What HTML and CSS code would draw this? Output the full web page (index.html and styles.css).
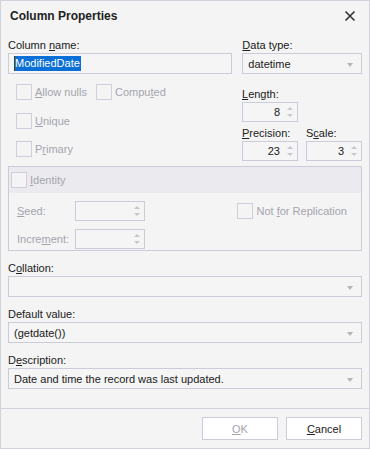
FILE: index.html
```html
<!DOCTYPE html>
<html>
<head>
<meta charset="utf-8">
<link rel="stylesheet" href="styles.css">
</head>
<body>
<div class="window">
  <div class="titlebar">
    <span class="title">Column Properties</span>
    <svg class="close" width="12" height="12" viewBox="0 0 12 12"><path d="M1.5 1.5 L10.5 10.5 M10.5 1.5 L1.5 10.5" stroke="#333" stroke-width="1.6"/></svg>
  </div>
  <div class="content">
    <div class="row1">
      <div class="field name-field">
        <label class="lbl">Column <u>n</u>ame:</label>
        <div class="input"><span class="caret"></span><span class="sel">ModifiedDate</span></div>
      </div>
      <div class="field type-field">
        <label class="lbl"><u>D</u>ata type:</label>
        <div class="input combo"><span>datetime</span><i class="arrow"></i></div>
      </div>
    </div>
    <div class="row2">
      <div class="checks">
        <div class="checkline">
          <div class="chk"><span class="box"></span><span class="dis"><u>A</u>llow nulls</span></div>
          <div class="chk"><span class="box"></span><span class="dis">Compu<u>t</u>ed</span></div>
        </div>
        <div class="checkline">
          <div class="chk"><span class="box"></span><span class="dis"><u>U</u>nique</span></div>
        </div>
        <div class="checkline">
          <div class="chk"><span class="box"></span><span class="dis">P<u>r</u>imary</span></div>
        </div>
      </div>
      <div class="sizes">
        <label class="lbl"><u>L</u>ength:</label>
        <div class="spin"><span class="val">8</span><span class="arrows"><i class="up"></i><i class="down"></i></span></div>
        <div class="prec-row">
          <div class="pfield">
            <label class="lbl"><u>P</u>recision:</label>
            <div class="spin"><span class="val">23</span><span class="arrows"><i class="up"></i><i class="down"></i></span></div>
          </div>
          <div class="pfield">
            <label class="lbl">S<u>c</u>ale:</label>
            <div class="spin"><span class="val">3</span><span class="arrows"><i class="up"></i><i class="down"></i></span></div>
          </div>
        </div>
      </div>
    </div>
    <div class="group">
      <div class="group-head">
        <span class="box"></span><span class="dis"><u>I</u>dentity</span>
      </div>
      <div class="group-body">
        <div class="idcol">
          <div class="idrow"><span class="dis idlbl"><u>S</u>eed:</span><div class="spin dspin"><span class="arrows"><i class="up"></i><i class="down"></i></span></div></div>
          <div class="idrow"><span class="dis idlbl">Incre<u>m</u>ent:</span><div class="spin dspin"><span class="arrows"><i class="up"></i><i class="down"></i></span></div></div>
        </div>
        <div class="chk repl"><span class="box"></span><span class="dis">Not <u>f</u>or Replication</span></div>
      </div>
    </div>
    <div class="field wide">
      <label class="lbl">C<u>o</u>llation:</label>
      <div class="input combo"><span></span><i class="arrow"></i></div>
    </div>
    <div class="field wide">
      <label class="lbl">Default value:</label>
      <div class="input combo"><span>(getdate())</span><i class="arrow"></i></div>
    </div>
    <div class="field wide">
      <label class="lbl">D<u>e</u>scription:</label>
      <div class="input combo"><span>Date and time the record was last updated.</span><i class="arrow"></i></div>
    </div>
  </div>
  <div class="footer">
    <button class="btn dis-btn"><u>O</u>K</button>
    <button class="btn"><u>C</u>ancel</button>
  </div>
</div>
</body>
</html>
```

FILE: styles.css
```css
* { box-sizing: border-box; }
html, body { margin: 0; padding: 0; background: #f4f4f4; }
body {
  font-family: "Liberation Sans", Arial, sans-serif;
  font-size: 11px;
  color: #202020;
}
u { text-decoration: underline; text-underline-offset: 1px; }
.window {
  width: 370px;
  height: 449px;
  border: 1px solid #d2d2da;
  background: #f4f4f4;
  display: flex;
  flex-direction: column;
}
.titlebar {
  height: 30px;
  display: flex;
  align-items: center;
  justify-content: space-between;
  padding: 0 13px 0 9px;
}
.title { font-weight: bold; font-size: 12px; color: #222; }
.content {
  flex: 1;
  padding: 6px 7px 0 7px;
  display: flex;
  flex-direction: column;
}
.lbl { display: block; height: 16px; line-height: 16px; }
.row1 { display: flex; gap: 10px; }
.name-field { width: 225px; }
.type-field { width: 120px; }
.input {
  height: 21px;
  border: 1px solid #cbcbd9;
  background: #f5f5f5;
  display: flex;
  align-items: center;
  padding: 0 5px;
}
.caret { width: 1px; height: 15px; background: #5a3b00; }
.sel {
  background: #0a6fd6;
  color: #fff;
  line-height: 15px;
  padding: 0 1px 0 0;
}
.combo { justify-content: space-between; padding-right: 8px; }
.arrow {
  width: 0; height: 0;
  border-left: 3.5px solid transparent;
  border-right: 3.5px solid transparent;
  border-top: 4px solid #b4b4bc;
  margin-top: 2px;
}
.row2 {
  display: flex;
  justify-content: space-between;
  height: 92px;
}
.checks { padding: 10px 0 0 8px; }
.checkline { display: flex; gap: 9px; height: 28.5px; }
.chk { display: flex; align-items: center; gap: 3px; height: 16px; }
.box {
  width: 16px; height: 16px;
  border: 1px solid #cfcfdc;
  background: #f4f4f4;
  flex: none;
}
.dis { color: #a4a4ae; }
.sizes { width: 120px; padding-top: 12px; }
.spin {
  width: 56px;
  height: 20px;
  border: 1px solid #cbcbd9;
  background: #f5f5f5;
  display: flex;
  align-items: center;
  justify-content: flex-end;
  padding-right: 4px;
}
.val { margin-right: 7px; }
.arrows { display: flex; flex-direction: column; gap: 4px; }
.arrows i {
  display: block;
  width: 0; height: 0;
  border-left: 3px solid transparent;
  border-right: 3px solid transparent;
}
.arrows .up { border-bottom: 3px solid #c6c6ce; }
.arrows .down { border-top: 3px solid #c6c6ce; }
.prec-row { display: flex; gap: 8px; margin-top: 3px; }
.group {
  border: 1px solid #cbcbd9;
  height: 85px;
  display: flex;
  flex-direction: column;
}
.group-head {
  height: 26px;
  background: #ebebef;
  display: flex;
  align-items: center;
  gap: 3px;
  padding-left: 2px;
}
.group-body {
  flex: 1;
  display: flex;
  justify-content: space-between;
  padding: 8px 14px 0 8px;
}
.idcol { display: flex; flex-direction: column; gap: 8px; }
.idrow { display: flex; align-items: center; }
.idlbl { width: 58px; }
.dspin { width: 70px; }
.repl { margin-top: 2px; }
.wide { margin-top: 9px; }
.wide .input { width: 354px; height: 21px; }
.footer {
  height: 40px;
  border-top: 1px solid #d2d2da;
  display: flex;
  justify-content: flex-end;
  align-items: flex-start;
  gap: 8px;
  padding: 8px 7px 0 0;
}
.btn {
  width: 76px;
  height: 23px;
  background: #ffffff;
  border: 1px solid #cbcbd9;
  font-family: inherit;
  font-size: 11px;
  color: #202020;
  padding: 0;
}
.dis-btn { color: #a4a4ae; }
```
